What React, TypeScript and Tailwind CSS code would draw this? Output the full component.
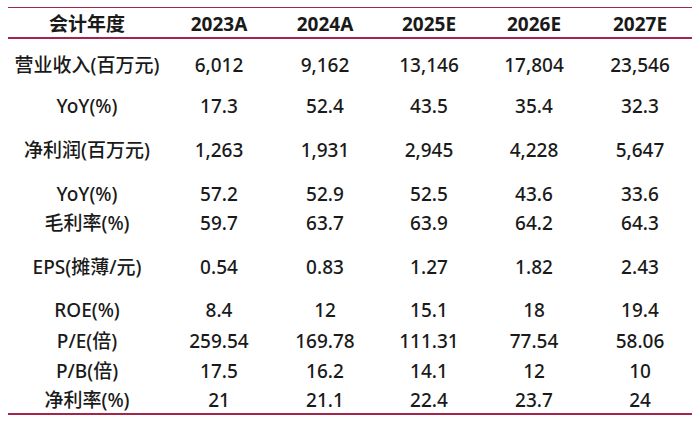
const cols = ["2023A", "2024A", "2025E", "2026E", "2027E"];

const rows: { label: string; values: string[]; h: string; pt: string }[] = [
  { label: "营业收入(百万元)", values: ["6,012", "9,162", "13,146", "17,804", "23,546"], h: "h-[47px]", pt: "pt-[14px]" },
  { label: "YoY(%)", values: ["17.3", "52.4", "43.5", "35.4", "32.3"], h: "h-[42px]", pt: "pt-[8px]" },
  { label: "净利润(百万元)", values: ["1,263", "1,931", "2,945", "4,228", "5,647"], h: "h-[44px]", pt: "pt-[10px]" },
  { label: "YoY(%)", values: ["57.2", "52.9", "52.5", "43.6", "33.6"], h: "h-[37px]", pt: "pt-[10px]" },
  { label: "毛利率(%)", values: ["59.7", "63.7", "63.9", "64.2", "64.3"], h: "h-[36px]", pt: "pt-[2px]" },
  { label: "EPS(摊薄/元)", values: ["0.54", "0.83", "1.27", "1.82", "2.43"], h: "h-[45px]", pt: "pt-[10px]" },
  { label: "ROE(%)", values: ["8.4", "12", "15.1", "18", "19.4"], h: "h-[36px]", pt: "pt-[8px]" },
  { label: "P/E(倍)", values: ["259.54", "169.78", "111.31", "77.54", "58.06"], h: "h-[30px]", pt: "pt-[3px]" },
  { label: "P/B(倍)", values: ["17.5", "16.2", "14.1", "12", "10"], h: "h-[29px]", pt: "pt-[3px]" },
  { label: "净利率(%)", values: ["21", "21.1", "22.4", "23.7", "24"], h: "h-[28px]", pt: "pt-[3px]" },
];

const grid = "grid grid-cols-[158px_106px_106px_102px_108px_104px]";

export default function App() {
  return (
    <div
      className="w-[700px] h-[423px] bg-white pt-[7px] pl-[8px] text-[#1a1a1a]"
      style={{ fontFamily: '"Noto Sans", "Noto Sans CJK SC", sans-serif' }}
    >
      <div className="w-[684px] border-t border-b-2 border-t-[#a3264a] border-b-[#a3264a]">
        <div className={`${grid} h-[31px] pt-[4px] border-b-2 border-[#a3264a] text-[19px] leading-[24px] font-bold`}>
          <div className="text-center">会计年度</div>
          {cols.map((c) => (
            <div key={c} className="text-center">
              {c}
            </div>
          ))}
        </div>
        {rows.map((r, i) => (
          <div key={i} className={`${grid} ${r.h} ${r.pt} text-[19px] leading-[24px] font-medium`}>
            <div className="text-center whitespace-nowrap">{r.label}</div>
            {r.values.map((v, j) => (
              <div key={j} className="text-center">
                {v}
              </div>
            ))}
          </div>
        ))}
      </div>
    </div>
  );
}
